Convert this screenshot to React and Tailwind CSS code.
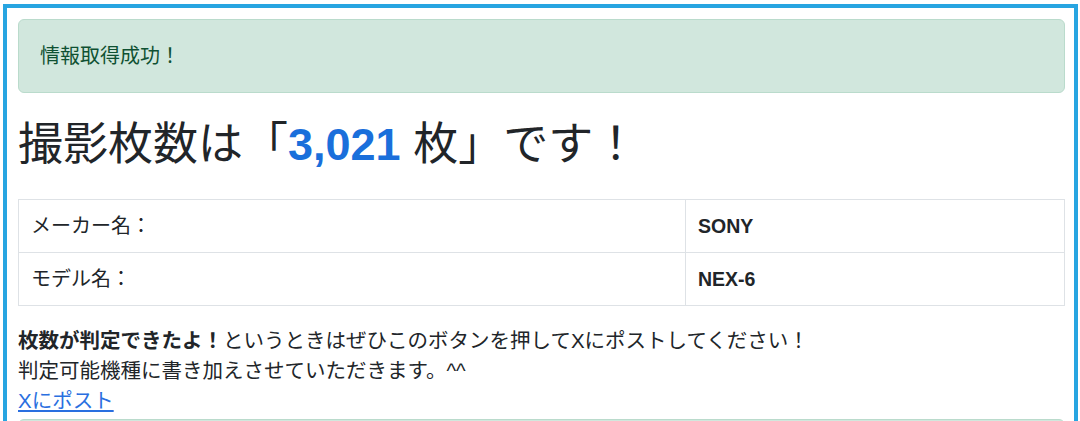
// App.jsx

export default function App() {
  return (
    <div
      className="min-h-[421px] bg-white text-[#212529] text-[20px] leading-[30px]"
      style={{ fontFamily: '"Liberation Sans", "Noto Sans CJK JP", sans-serif' }}
    >
      {/* Outer framed box */}
      <div className="ml-[3px] mt-[4px] w-[1075px] border-4 border-b-0 border-[#27a5e1] pl-[11px] pr-[9px] pt-[11px] pb-4">
        {/* Success alert */}
        <div className="rounded-[6px] border border-[#badbcc] bg-[#d1e7dd] px-[21px] py-[21px] text-[20px] leading-[30px] text-[#0f5132]">
          情報取得成功！
        </div>

        {/* Shot count */}
        <h1 className="mt-[25px] mb-[28px] text-[45px] leading-[53px] font-normal">
          撮影枚数は「<span className="font-bold text-[#1a6fdb]">3,021</span> 枚」です！
        </h1>

        {/* Camera info table */}
        <table className="w-full border-collapse border border-[#dee2e6]">
          <tbody>
            <tr>
              <td className="w-[667px] border border-[#dee2e6] px-[12px] py-[11px]">メーカー名：</td>
              <td className="border border-[#dee2e6] px-[12px] py-[11px] font-bold text-[19.5px]">SONY</td>
            </tr>
            <tr>
              <td className="w-[667px] border border-[#dee2e6] px-[12px] py-[11px]">モデル名：</td>
              <td className="border border-[#dee2e6] px-[12px] py-[11px] font-bold text-[19.5px]">NEX-6</td>
            </tr>
          </tbody>
        </table>

        {/* Post request */}
        <p className="mt-[20px] text-[20.5px]">
          <span className="font-bold">枚数が判定できたよ！</span>
          というときはぜひこのボタンを押してXにポストしてください！
          <br />
          判定可能機種に書き加えさせていただきます。^^
          <br />
          <a href="#" className="text-[#2a6fe0] underline underline-offset-2">Xにポスト</a>
        </p>

        {/* Next alert (cut off by the window) */}
        <div className="mt-[3px] rounded-[6px] border border-[#badbcc] bg-[#d1e7dd] px-[21px] py-[21px] text-[20px] leading-[30px] text-[#0f5132]">
          &nbsp;
        </div>
      </div>
    </div>
  );
}
